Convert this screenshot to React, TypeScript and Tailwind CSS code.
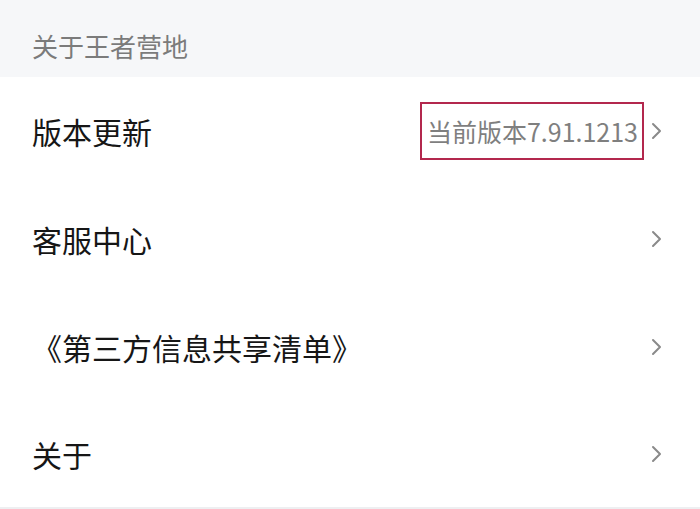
const ROWS = [
  { label: "版本更新", value: "当前版本7.91.1213" },
  { label: "客服中心" },
  { label: "《第三方信息共享清单》" },
  { label: "关于" },
];

const Chevron = () => (
  <svg width="14" height="20" viewBox="0 0 14 20" className="shrink-0">
    <path d="M3 3 L10 10 L3 17" fill="none" stroke="#8a8a8a" strokeWidth="2" strokeLinecap="round" strokeLinejoin="round" />
  </svg>
);

export default function App() {
  return (
    <div
      className="w-[700px] h-[509px] bg-[#f6f7f9] overflow-hidden"
      style={{ fontFamily: '"Noto Sans CJK SC", "Noto Sans", sans-serif' }}
    >
      <div className="h-[77px] flex items-center pl-[32px] pt-[14px] text-[26px] text-[#7b7b7b]">
        关于王者营地
      </div>
      <div className="bg-white border-b-2 border-[#eeeff1]">
        {ROWS.map((row, i) => (
          <div
            key={row.label}
            className={`flex items-center justify-between pl-[32px] pr-[36px] ${i === 3 ? "h-[106px]" : "h-[108px]"}`}
          >
            <span className="text-[30px] text-[#161616] leading-none">{row.label}</span>
            <div className="flex items-center gap-[6px]">
              {row.value && (
                <span className="h-[58px] flex items-center pl-[5px] pr-[4px] border-2 border-[#b3284d] text-[25px] text-[#7f7f7f] leading-none">
                  {row.value}
                </span>
              )}
              <Chevron />
            </div>
          </div>
        ))}
      </div>
    </div>
  );
}
